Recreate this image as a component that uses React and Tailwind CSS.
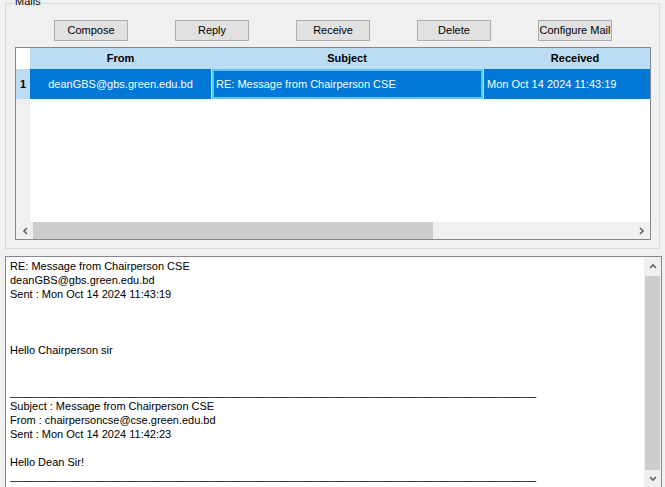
const font = { fontFamily: '"Liberation Sans", Arial, sans-serif' };

const buttons = ["Compose", "Reply", "Receive", "Delete", "Configure Mail"];

const rule = "_".repeat(86);

const bodyLines = [
  "RE: Message from Chairperson CSE",
  "deanGBS@gbs.green.edu.bd",
  "Sent : Mon Oct 14 2024 11:43:19",
  "",
  "",
  "",
  "Hello Chairperson sir",
  "",
  "",
  rule,
  "Subject : Message from Chairperson CSE",
  "From : chairpersoncse@cse.green.edu.bd",
  "Sent : Mon Oct 14 2024 11:42:23",
  "",
  "Hello Dean Sir!",
  rule,
  "",
];

function Chevron({ dir }) {
  const paths = {
    left: "M6 1 L3 4 L6 7",
    right: "M2 1 L5 4 L2 7",
    up: "M1 6 L4 3 L7 6",
    down: "M1 2 L4 5 L7 2",
  };
  return (
    <svg width="8" height="8" viewBox="0 0 8 8">
      <path d={paths[dir]} fill="none" stroke="#606060" strokeWidth="1.6" />
    </svg>
  );
}

export default function App() {
  return (
    <div
      className="h-[487px] w-[665px] overflow-hidden bg-[#f0f0f0] pt-[3px] text-[11px] text-black"
      style={font}
    >
      {/* Mails group box */}
      <div className="relative ml-[5px] h-[246px] w-[655px] border border-[#d9d9d9]">
        <span className="absolute -top-[10px] left-[8px] bg-[#f0f0f0] px-px leading-[14px]">
          Mails
        </span>

        <div className="flex gap-[47px] pl-[48px] pt-[16px]">
          {buttons.map((b) => (
            <div
              key={b}
              className="flex h-[21px] w-[74px] items-center justify-center whitespace-nowrap border border-[#adadad] bg-[#e1e1e1]"
            >
              {b}
            </div>
          ))}
        </div>

        {/* Table */}
        <div className="ml-[9px] mt-[6px] flex h-[193px] w-[636px] flex-col border border-[#828790] bg-white">
          <div className="flex min-h-0 flex-1">
            <div className="flex w-[14px] flex-col bg-[#f0f0f0]">
              <div className="h-[21px] bg-white" />
              <div className="flex h-[30px] items-center justify-center bg-[#bcdcf4] font-bold">
                1
              </div>
            </div>
            <div className="flex-1 overflow-hidden">
              <div className="flex h-[21px] w-[700px] bg-[#bcdcf4] font-bold">
                <div className="flex w-[181px] items-center justify-center">From</div>
                <div className="flex w-[272px] items-center justify-center">Subject</div>
                <div className="flex w-[184px] items-center justify-center">Received</div>
              </div>
              <div className="flex h-[30px] w-[700px] bg-[#0078d7] text-white">
                <div className="flex w-[181px] items-center justify-center">
                  deanGBS@gbs.green.edu.bd
                </div>
                <div className="flex w-[272px] items-center border-l border-[#cfe3f5]">
                  <div className="flex h-full w-full items-center border-2 border-[#5cc6ee] pl-[2px]">
                    RE: Message from Chairperson CSE
                  </div>
                </div>
                <div className="flex w-[184px] items-center border-l border-[#cfe3f5] pl-[3px]">
                  Mon Oct 14 2024 11:43:19
                </div>
              </div>
            </div>
          </div>
          {/* horizontal scrollbar */}
          <div className="flex h-[17px] bg-[#f0f0f0]">
            <div className="flex w-[17px] items-center justify-center">
              <Chevron dir="left" />
            </div>
            <div className="flex-1">
              <div className="h-full w-[400px] bg-[#cdcdcd]" />
            </div>
            <div className="flex w-[17px] items-center justify-center">
              <Chevron dir="right" />
            </div>
          </div>
        </div>
      </div>

      {/* Message body */}
      <div className="ml-[5px] mt-[7px] flex h-[240px] w-[657px] border border-[#828790] bg-white">
        <div className="flex-1 overflow-hidden whitespace-pre pl-[4px] pt-[2px] leading-[14px]">
          {bodyLines.map((l, i) => (
            <div key={i} className="h-[14px]">
              {l}
            </div>
          ))}
        </div>
        <div className="flex w-[17px] flex-col bg-[#f0f0f0]">
          <div className="flex h-[17px] items-center justify-center">
            <Chevron dir="up" />
          </div>
          <div className="mx-px mt-[2px] h-[194px] bg-[#cdcdcd]" />
          <div className="flex h-[17px] items-center justify-center">
            <Chevron dir="down" />
          </div>
        </div>
      </div>
    </div>
  );
}
